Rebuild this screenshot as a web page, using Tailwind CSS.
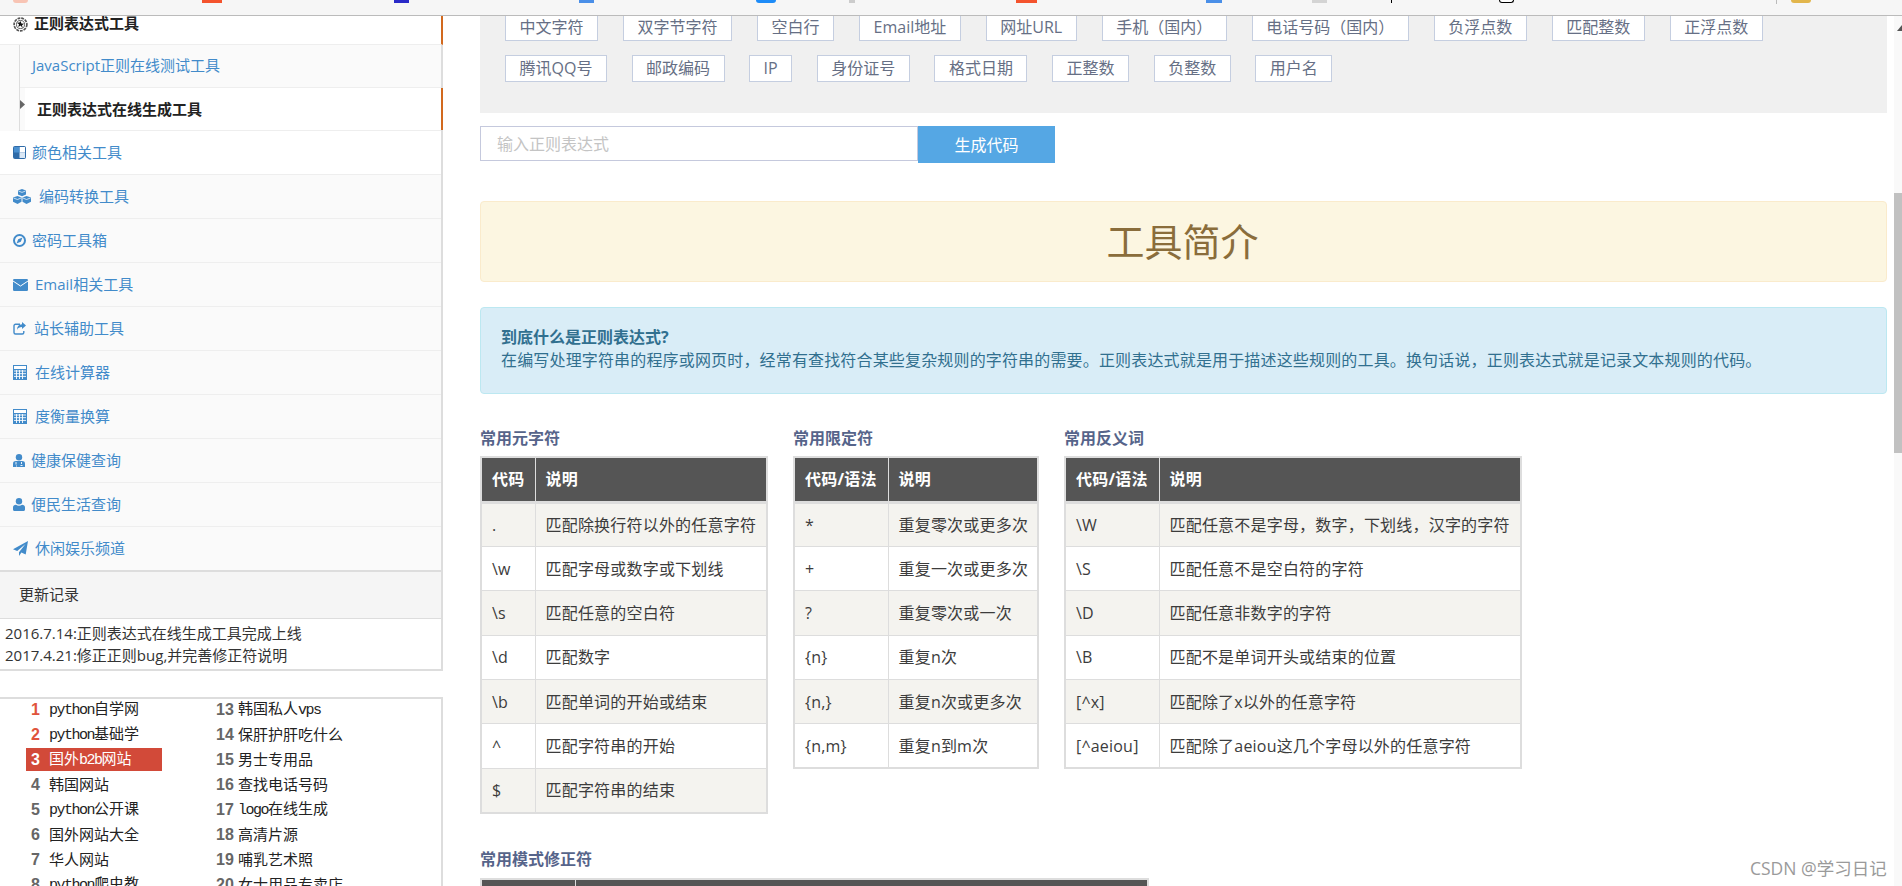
<!DOCTYPE html>
<html lang="zh-CN">
<head>
    <meta charset="UTF-8">
    <meta name="viewport" content="width=device-width, initial-scale=1.0">
    <title>正则表达式在线生成工具</title>
    <script src="https://cdn.jsdelivr.net/npm/@tailwindcss/browser@4"></script>
</head>
<body class="bg-white h-[886px] overflow-hidden font-['Open_Sans','Noto_Sans_CJK_SC',sans-serif] text-[#3c3c3c]">

    <!-- Browser chrome, only the bottom edge of the bookmarks is left -->
    <div class="relative z-10 flex items-start h-[16px] bg-[#f6f6f6] border-b border-[#bbbbbb]">
        <span class="ml-[13px] w-[15px] h-[3px] rounded-b-full bg-[#f8c4b4]"></span>
        <span class="ml-[174px] w-[20px] h-[3px] bg-[#f4532d]"></span>
        <span class="ml-[172px] w-[15px] h-[3px] bg-[#2a2ac8]"></span>
        <span class="ml-[170px] w-[15px] h-[3px] bg-[#4a8fe8]"></span>
        <span class="ml-[162px] w-[20px] h-[3px] rounded-b-full bg-[#1e8cf8]"></span>
        <span class="ml-[73px] w-[6px] h-[3px] bg-[#cccccc]"></span>
        <span class="ml-[161px] w-[21px] h-[3px] bg-[#f4532d]"></span>
        <span class="ml-[169px] w-[16px] h-[3px] bg-[#4a8fe8]"></span>
        <span class="ml-[90px] w-[15px] h-[3px] bg-[#d4d4d4]"></span>
        <span class="ml-[64px] w-px h-[3px] bg-black"></span>
        <span class="ml-[107px] w-[15px] h-[3px] rounded-b-sm border-x border-b border-black bg-white"></span>
        <span class="ml-[262px] w-px h-[4px] bg-[#bbbbbb]"></span>
        <span class="ml-[14px] w-[20px] h-[3px] rounded-b-sm bg-[#e2b64c]"></span>
    </div>

    <div class="flex items-start">

        <!-- Sidebar -->
        <aside class="w-[443px] shrink-0 text-[15px]">
            <div class="border-r-2 border-[#dddddd]">
                <div class="flex items-end pb-[10px] pl-[13px] h-[29px] bg-white border-b border-[#eeeeee] border-r-2 border-r-[#d2691e] -mr-[2px] font-bold text-[#222]">
                    <svg class="w-[15px] h-[15px] mr-[6px] mb-[2px]" viewBox="0 0 16 16"><circle cx="8" cy="8" r="6.8" fill="none" stroke="#555" stroke-width="1.8" stroke-dasharray="3 1"/><circle cx="8" cy="8" r="4.300" fill="#fff" stroke="#555"/><path d="M8 4.200l1 2.700 2.800.2-2.200 1.700.8 2.800L8 9.100l-2.400 1.500.8-2.800-2.200-1.700 2.800-.2z" fill="#111"/></svg>
                    <span>正则表达式工具</span>
                </div>
                <div class="bg-[#fafafa] pl-[19px]">
                    <div class="border-l border-[#dddddd]">
                        <div class="flex items-center pl-[12px] pb-[2px] h-[43px] border-b border-[#eeeeee] text-[#428bca]">JavaScript正则在线测试工具</div>
                        <div class="flex items-center h-[43px] border-b border-[#eeeeee]">
                            <svg class="w-[5px] h-[9px] mb-[9px]" viewBox="0 0 5 9"><path d="M0 0l5 4.500L0 9z" fill="#666"/></svg>
                            <div class="flex items-center flex-1 h-full pl-[12px] bg-white border-r-2 border-[#d2691e] -mr-[2px] font-bold text-[#222]">正则表达式在线生成工具</div>
                        </div>
                    </div>
                </div>
                <nav class="text-[#428bca] bg-[#fafafa]">
                    <a class="flex items-center pl-[13px] h-[44px] border-b border-[#eeeeee] bg-white">
                        <svg class="w-[13px] h-[13px] mr-[6px]" viewBox="0 0 13 13"><rect width="13" height="13" rx="2" fill="#2f6ba8"/><rect x="6.500" y="1" width="5.500" height="5.500" fill="#fff"/><rect x="6.500" y="6.500" width="5.500" height="5.500" fill="#dbe8f5"/><rect x="1" y="1" width="5.500" height="5.500" fill="#4a90d0"/></svg>
                        <span>颜色相关工具</span>
                    </a>
                    <a class="flex items-center pl-[13px] h-[44px] border-b border-[#eeeeee]">
                        <svg class="w-[18px] h-[15px] mr-[8px]" viewBox="0 0 18 15"><path d="M9 0l4 1.600v4L9 7.200 5 5.600v-4z" fill="#428bca"/><path d="M4.500 7L8.500 8.600v4.200L4.500 15 0 12.800V8.600z" fill="#428bca"/><path d="M13.500 7L18 8.600v4.200L13.500 15l-4-2.200V8.600z" fill="#428bca"/><path d="M5.500 2L9 3.400 12.500 2M.5 9l4 1.500 3.500-1.500M10 9l3.500 1.500L17.500 9" fill="none" stroke="#fff" stroke-width=".7"/></svg>
                        <span>编码转换工具</span>
                    </a>
                    <a class="flex items-center pl-[13px] h-[44px] border-b border-[#eeeeee]">
                        <svg class="w-[13px] h-[13px] mr-[6px]" viewBox="0 0 13 13"><circle cx="6.500" cy="6.500" r="5.500" fill="none" stroke="#428bca" stroke-width="2"/><path d="M9.500 3.500L7.800 7.800 3.500 9.500 5.200 5.200z" fill="#428bca"/></svg>
                        <span>密码工具箱</span>
                    </a>
                    <a class="flex items-center pl-[13px] h-[44px] border-b border-[#eeeeee]">
                        <svg class="w-[15px] h-[12px] mr-[7px]" viewBox="0 0 15 12"><rect width="15" height="12" rx="1.200" fill="#428bca"/><path d="M0 2l7.500 5L15 2" fill="none" stroke="#fff" stroke-width="1"/></svg>
                        <span>Email相关工具</span>
                    </a>
                    <a class="flex items-center pl-[13px] h-[44px] border-b border-[#eeeeee]">
                        <svg class="w-[13px] h-[13px] mr-[8px]" viewBox="0 0 13 13"><path d="M7 2.200H2.500A1.500 1.500 0 0 0 1 3.700v6.800A1.500 1.500 0 0 0 2.500 12h6.800a1.500 1.500 0 0 0 1.500-1.500V9" fill="none" stroke="#428bca" stroke-width="1.400"/><path d="M9 0l4 3.500L9 7V5C6.500 5 5 5.700 4 8c0-3.500 1.800-5.500 5-5.700z" fill="#428bca"/></svg>
                        <span>站长辅助工具</span>
                    </a>
                    <a class="flex items-center pl-[13px] h-[44px] border-b border-[#eeeeee]">
                        <svg class="w-[14px] h-[15px] mr-[8px]" viewBox="0 0 14 15"><rect width="14" height="15" fill="#428bca"/><rect x="1" y="1" width="12" height="3" fill="#fff"/><path d="M1 6h12M1 8.700h12M1 11.400h12M3.500 5v9M6.500 5v9M9.500 5v9" stroke="#fff" stroke-width=".9"/></svg>
                        <span>在线计算器</span>
                    </a>
                    <a class="flex items-center pl-[13px] h-[44px] border-b border-[#eeeeee]">
                        <svg class="w-[14px] h-[15px] mr-[8px]" viewBox="0 0 14 15"><rect width="14" height="15" fill="#428bca"/><rect x="1" y="1" width="12" height="3" fill="#fff"/><path d="M1 6h12M1 8.700h12M1 11.400h12M3.500 5v9M6.500 5v9M9.500 5v9" stroke="#fff" stroke-width=".9"/></svg>
                        <span>度衡量换算</span>
                    </a>
                    <a class="flex items-center pl-[13px] h-[44px] border-b border-[#eeeeee]">
                        <svg class="w-[12px] h-[13px] mr-[6px]" viewBox="0 0 12 13"><circle cx="6" cy="3.200" r="3.200" fill="#428bca"/><path d="M0 13V9.500C0 7.800 1.200 7 3 7h6c1.800 0 3 .8 3 2.500V13z" fill="#428bca"/><path d="M3 8v2.500M3 12h1M8.500 8v2M7.500 11.500h2" stroke="#fff" stroke-width=".9" fill="none"/></svg>
                        <span>健康保健查询</span>
                    </a>
                    <a class="flex items-center pl-[13px] h-[44px] border-b border-[#eeeeee]">
                        <svg class="w-[12px] h-[13px] mr-[6px]" viewBox="0 0 12 13"><circle cx="6" cy="3.200" r="3.200" fill="#428bca"/><path d="M0 11.500V9.500C0 7.800 1.200 6.800 3 6.800c.8.600 1.800 1 3 1s2.200-.4 3-1c1.800 0 3 1 3 2.700v2c0 .9-.6 1.500-1.500 1.500h-9C.6 13 0 12.400 0 11.500z" fill="#428bca"/></svg>
                        <span>便民生活查询</span>
                    </a>
                    <a class="flex items-center pl-[13px] h-[45px] border-b-2 border-[#dddddd]">
                        <svg class="w-[15px] h-[15px] mr-[7px]" viewBox="0 0 15 15"><path d="M15 0l-2.300 13.500-4.300-1.900L6 15v-3.800L12.500 3 4.200 10 0 8.300z" fill="#428bca"/></svg>
                        <span>休闲娱乐频道</span>
                    </a>
                </nav>
                <div class="flex items-center pl-[19px] pb-[2px] h-[47px] bg-[#f5f5f5] border-b border-[#dddddd] text-[#333]">更新记录</div>
                <div class="pl-[5px] pt-[3px] pb-[3px] h-[52px] border-b-2 border-[#dddddd] leading-[22px] text-[#333]">
                    <p>2016.7.14:正则表达式在线生成工具完成上线</p>
                    <p>2017.4.21:修正正则bug,并完善修正符说明</p>
                </div>
            </div>

            <!-- Link list -->
            <div class="mt-[26px] border-t-2 border-r-2 border-[#dddddd] h-[300px] overflow-hidden text-[15px] text-[#222]">
                <div class="-mt-[2px] grid grid-flow-col grid-rows-8 grid-cols-[216px_1fr]">
                    <div class="flex items-center h-[25px] ml-[26px] pl-[5px]"><b class="w-[18px] font-['Liberation_Sans'] text-[16px] text-[#e0533c]">1</b><span><span class="font-['Liberation_Mono'] tracking-[-1.500px]">python</span>自学网</span></div>
                    <div class="flex items-center h-[25px] ml-[26px] pl-[5px]"><b class="w-[18px] font-['Liberation_Sans'] text-[16px] text-[#e0533c]">2</b><span><span class="font-['Liberation_Mono'] tracking-[-1.500px]">python</span>基础学</span></div>
                    <div class="flex items-center h-[25px]"><div class="flex items-center w-[136px] h-[23px] ml-[26px] pl-[5px] bg-[#d24a39] text-white"><b class="w-[18px] font-['Liberation_Sans'] text-[16px]">3</b><span>国外<span class="font-['Liberation_Mono'] tracking-[-1.500px]">b2b</span>网站</span></div></div>
                    <div class="flex items-center h-[25px] ml-[26px] pl-[5px]"><b class="w-[18px] font-['Liberation_Sans'] text-[16px] text-[#666]">4</b><span>韩国网站</span></div>
                    <div class="flex items-center h-[25px] ml-[26px] pl-[5px]"><b class="w-[18px] font-['Liberation_Sans'] text-[16px] text-[#666]">5</b><span><span class="font-['Liberation_Mono'] tracking-[-1.500px]">python</span>公开课</span></div>
                    <div class="flex items-center h-[25px] ml-[26px] pl-[5px]"><b class="w-[18px] font-['Liberation_Sans'] text-[16px] text-[#666]">6</b><span>国外网站大全</span></div>
                    <div class="flex items-center h-[25px] ml-[26px] pl-[5px]"><b class="w-[18px] font-['Liberation_Sans'] text-[16px] text-[#666]">7</b><span>华人网站</span></div>
                    <div class="flex items-center h-[25px] ml-[26px] pl-[5px]"><b class="w-[18px] font-['Liberation_Sans'] text-[16px] text-[#666]">8</b><span><span class="font-['Liberation_Mono'] tracking-[-1.500px]">python</span>爬虫教</span></div>
                    <div class="flex items-center h-[25px]"><b class="w-[22px] font-['Liberation_Sans'] text-[16px] text-[#666]">13</b><span>韩国私人<span class="font-['Liberation_Mono'] tracking-[-1.500px]">vps</span></span></div>
                    <div class="flex items-center h-[25px]"><b class="w-[22px] font-['Liberation_Sans'] text-[16px] text-[#666]">14</b><span>保肝护肝吃什么</span></div>
                    <div class="flex items-center h-[25px]"><b class="w-[22px] font-['Liberation_Sans'] text-[16px] text-[#666]">15</b><span>男士专用品</span></div>
                    <div class="flex items-center h-[25px]"><b class="w-[22px] font-['Liberation_Sans'] text-[16px] text-[#666]">16</b><span>查找电话号码</span></div>
                    <div class="flex items-center h-[25px]"><b class="w-[22px] font-['Liberation_Sans'] text-[16px] text-[#666]">17</b><span><span class="font-['Liberation_Mono'] tracking-[-1.500px]">logo</span>在线生成</span></div>
                    <div class="flex items-center h-[25px]"><b class="w-[22px] font-['Liberation_Sans'] text-[16px] text-[#666]">18</b><span>高清片源</span></div>
                    <div class="flex items-center h-[25px]"><b class="w-[22px] font-['Liberation_Sans'] text-[16px] text-[#666]">19</b><span>哺乳艺术照</span></div>
                    <div class="flex items-center h-[25px]"><b class="w-[22px] font-['Liberation_Sans'] text-[16px] text-[#666]">20</b><span>女士用品专卖店</span></div>
                </div>
            </div>
        </aside>

        <!-- Main content -->
        <main class="ml-[37px] w-[1407px] shrink-0 text-[16px]">
            <section class="flex flex-col h-[97px] pl-[25px] bg-[#f0f0f0] text-[#666f85]">
                <div class="-mt-[2px] flex flex-col gap-[14px] [&_span]:h-[27px] [&_span]:px-[13.5px] [&_span]:bg-white [&_span]:border [&_span]:border-[#c5cee0] [&_span]:leading-[25px]">
                    <div class="flex gap-[25px]">
                        <span>中文字符</span><span>双字节字符</span><span>空白行</span><span>Email地址</span><span>网址URL</span><span>手机（国内）</span><span>电话号码（国内）</span><span>负浮点数</span><span>匹配整数</span><span>正浮点数</span>
                    </div>
                    <div class="flex gap-[24.6px]">
                        <span>腾讯QQ号</span><span>邮政编码</span><span>IP</span><span>身份证号</span><span>格式日期</span><span>正整数</span><span>负整数</span><span>用户名</span>
                    </div>
                </div>
            </section>

            <div class="mt-[13px] flex items-start">
                <input type="text" placeholder="输入正则表达式" class="w-[438px] h-[35px] px-[16px] bg-white border border-[#c5c9dd] placeholder:text-[#c4c4c4] outline-none">
                <button class="w-[137px] h-[37px] bg-[#55a7e4] text-white">生成代码</button>
            </div>

            <div class="mt-[38px] flex items-center justify-center h-[81px] pr-[2px] rounded-[4px] bg-[#fcf6e1] border border-[#faebcc] text-[38px] text-[#8a6d3b]">工具简介</div>

            <div class="mt-[25px] h-[87px] pt-[18px] px-[20px] rounded-[4px] bg-[#d9edf7] border border-[#bce8f1] leading-[23px] text-[#31708f]">
                <p class="font-bold">到底什么是正则表达式?</p>
                <p class="tracking-[0.16px]">在编写处理字符串的程序或网页时，经常有查找符合某些复杂规则的字符串的需要。正则表达式就是用于描述这些规则的工具。换句话说，正则表达式就是记录文本规则的代码。</p>
            </div>

            <div class="mt-[32px] flex items-start gap-[25px]">
                <div>
                    <h3 class="h-[30px] leading-[24px] font-bold text-[#56648a]">常用元字符</h3>
                    <table class="w-[288px] table-fixed border-collapse border-2 border-[#dddddd] tracking-[0.2px] whitespace-nowrap [&_th]:h-[45px] [&_th]:px-[10px] [&_th]:text-left [&_th]:bg-[#555555] [&_th]:text-white [&_th]:border-b-[3px] [&_th]:border-b-[#dddddd] [&_th]:border-x [&_th]:border-x-[#dddddd] [&_td]:h-[44.4px] [&_td]:px-[10px] [&_td]:border [&_td]:border-[#dddddd] [&_tbody_tr:nth-child(odd)]:bg-[#f4f3ef]">
                        <thead><tr><th class="w-[54px]">代码</th><th>说明</th></tr></thead>
                        <tbody>
                            <tr><td>.</td><td>匹配除换行符以外的任意字符</td></tr>
                            <tr><td>\w</td><td>匹配字母或数字或下划线</td></tr>
                            <tr><td>\s</td><td>匹配任意的空白符</td></tr>
                            <tr><td>\d</td><td>匹配数字</td></tr>
                            <tr><td>\b</td><td>匹配单词的开始或结束</td></tr>
                            <tr><td class="border-b-2">^</td><td class="border-b-2">匹配字符串的开始</td></tr>
                            <tr><td>$</td><td>匹配字符串的结束</td></tr>
                        </tbody>
                    </table>
                </div>
                <div>
                    <h3 class="h-[30px] leading-[24px] font-bold text-[#56648a]">常用限定符</h3>
                    <table class="w-[246px] table-fixed border-collapse border-2 border-[#dddddd] tracking-[0.2px] whitespace-nowrap [&_th]:h-[45px] [&_th]:px-[10px] [&_th]:text-left [&_th]:bg-[#555555] [&_th]:text-white [&_th]:border-b-[3px] [&_th]:border-b-[#dddddd] [&_th]:border-x [&_th]:border-x-[#dddddd] [&_td]:h-[44.4px] [&_td]:px-[10px] [&_td]:border [&_td]:border-[#dddddd] [&_tbody_tr:nth-child(odd)]:bg-[#f4f3ef]">
                        <thead><tr><th class="w-[94px]">代码/语法</th><th>说明</th></tr></thead>
                        <tbody>
                            <tr><td>*</td><td>重复零次或更多次</td></tr>
                            <tr><td>+</td><td>重复一次或更多次</td></tr>
                            <tr><td>?</td><td>重复零次或一次</td></tr>
                            <tr><td>{n}</td><td>重复n次</td></tr>
                            <tr><td>{n,}</td><td>重复n次或更多次</td></tr>
                            <tr><td>{n,m}</td><td>重复n到m次</td></tr>
                        </tbody>
                    </table>
                </div>
                <div>
                    <h3 class="h-[30px] leading-[24px] font-bold text-[#56648a]">常用反义词</h3>
                    <table class="w-[458px] table-fixed border-collapse border-2 border-[#dddddd] tracking-[0.2px] whitespace-nowrap [&_th]:h-[45px] [&_th]:px-[10px] [&_th]:text-left [&_th]:bg-[#555555] [&_th]:text-white [&_th]:border-b-[3px] [&_th]:border-b-[#dddddd] [&_th]:border-x [&_th]:border-x-[#dddddd] [&_td]:h-[44.4px] [&_td]:px-[10px] [&_td]:border [&_td]:border-[#dddddd] [&_tbody_tr:nth-child(odd)]:bg-[#f4f3ef]">
                        <thead><tr><th class="w-[94px]">代码/语法</th><th>说明</th></tr></thead>
                        <tbody>
                            <tr><td>\W</td><td>匹配任意不是字母，数字，下划线，汉字的字符</td></tr>
                            <tr><td>\S</td><td>匹配任意不是空白符的字符</td></tr>
                            <tr><td>\D</td><td>匹配任意非数字的字符</td></tr>
                            <tr><td>\B</td><td>匹配不是单词开头或结束的位置</td></tr>
                            <tr><td>[^x]</td><td>匹配除了x以外的任意字符</td></tr>
                            <tr><td>[^aeiou]</td><td>匹配除了aeiou这几个字母以外的任意字符</td></tr>
                        </tbody>
                    </table>
                </div>
            </div>

            <h3 class="mt-[33px] h-[31px] leading-[24px] font-bold text-[#56648a]">常用模式修正符</h3>
            <table class="w-[669px] table-fixed border-collapse border-2 border-[#dddddd] [&_th]:h-[44px] [&_th]:px-[10px] [&_th]:text-left [&_th]:bg-[#555555] [&_th]:text-white [&_th]:border-x [&_th]:border-x-[#dddddd]">
                <thead><tr><th class="w-[94px]">代码/语法</th><th>说明</th></tr></thead>
            </table>
        </main>

        <!-- Page scrollbar -->
        <div class="ml-auto w-[8px] h-[870px] bg-[#f9f9f9]">
            <svg class="mt-[9px] ml-[3px] w-[5px] h-[6px] block" viewBox="0 0 5 6"><path d="M5 0v6H0z" fill="#555"/></svg>
            <div class="mt-[162px] h-[260px] bg-[#c1c1c1]"></div>
        </div>
    </div>

    <!-- Image watermark -->
    <div class="absolute left-[1750px] top-[855px] text-[17.5px] text-[#9a9a9a]">CSDN @学习日记</div>

</body>
</html>
